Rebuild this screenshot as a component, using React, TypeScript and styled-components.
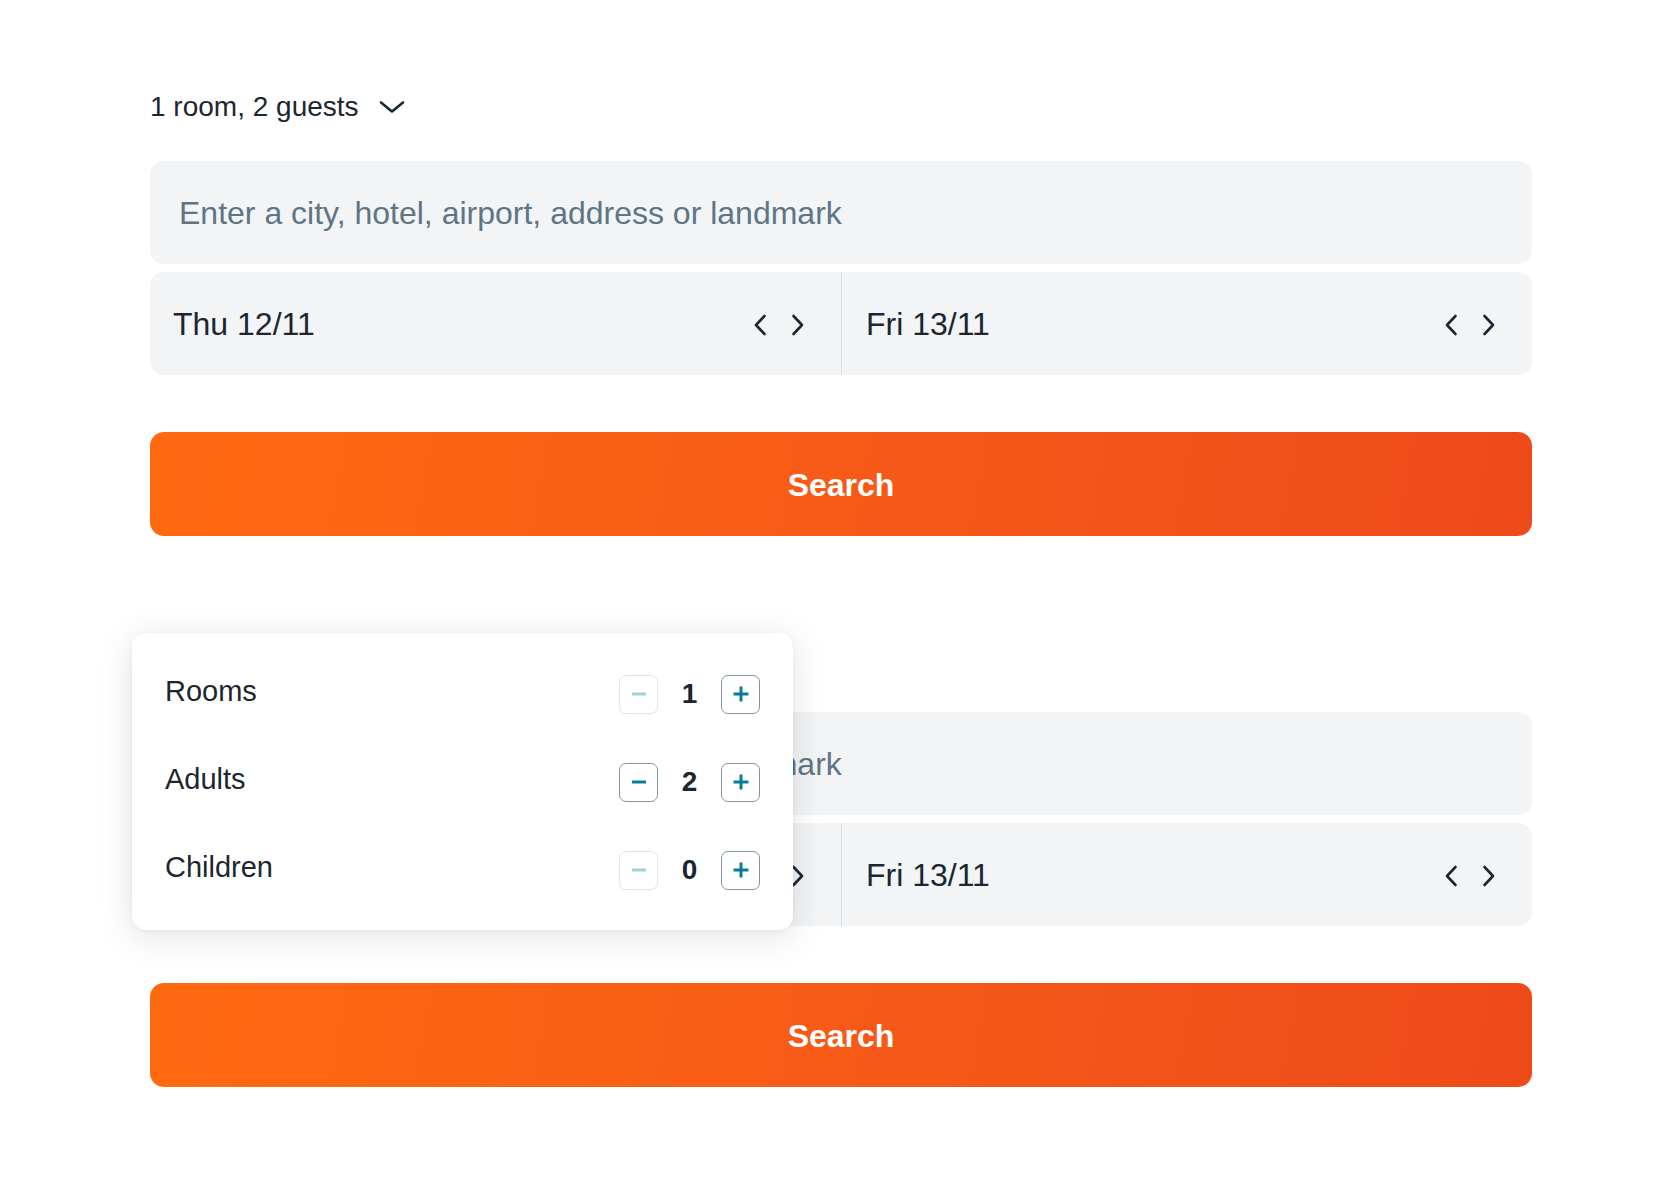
import styled, { createGlobalStyle } from "styled-components";

const GlobalStyle = createGlobalStyle`
  * { box-sizing: border-box; }
  body {
    margin: 0;
    background: #ffffff;
    font-family: "Liberation Sans", Arial, Helvetica, sans-serif;
    color: #1c2630;
  }
`

const Page = styled.div`
  width: 1680px;
  padding: 87px 148px 0 150px;
  display: flex;
  flex-direction: column;
  gap: 102px;
`

const Section = styled.section`
  position: relative;
  display: flex;
  flex-direction: column;
`

const GuestToggle = styled.div`
  height: 40px;
  display: flex;
  align-items: center;
  gap: 20px;
  font-size: 28px;
  color: #1c2630;
  margin-bottom: 34px;
`

const Field = styled.div`
  height: 103px;
  background: #f2f4f6;
  border-radius: 14px;
  display: flex;
  align-items: center;
  padding: 2px 29px 0;
  font-size: 32px;
  color: #5f7585;
`

const DateRow = styled.div`
  margin-top: 8px;
  height: 103px;
  background: #f2f4f6;
  border-radius: 14px;
  display: grid;
  grid-template-columns: 1fr 1fr;
`

const DateCell = styled.div<{ $divider?: boolean }>`
  display: flex;
  align-items: center;
  justify-content: space-between;
  padding: 2px 36px 0 ${p => (p.$divider ? "24px" : "23px")};
  border-left: ${p => (p.$divider ? "1px solid #d6dee4" : "none")};
  font-size: 32px;
  color: #1c2630;
`

const Arrows = styled.div`
  display: flex;
  gap: 24px;
  color: #1c2630;
`

const SearchButton = styled.button`
  margin-top: 57px;
  height: 104px;
  padding-top: 4px;
  border: none;
  border-radius: 14px;
  background: linear-gradient(100deg, #ff6a10 0%, #f85c17 45%, #ee4a1a 100%);
  color: #ffffff;
  font-family: "Liberation Sans", Arial, sans-serif;
  font-size: 32px;
  font-weight: 700;
  cursor: pointer;
`

const Popover = styled.div`
  position: absolute;
  top: -5px;
  left: -18px;
  width: 661px;
  height: 297px;
  background: #ffffff;
  border-radius: 14px;
  box-shadow: 0 6px 34px rgba(20, 30, 40, 0.13), 0 1px 4px rgba(20, 30, 40, 0.05);
  padding: 42px 33px 0 33px;
  display: flex;
  flex-direction: column;
  gap: 50px;
`

const CounterRow = styled.div`
  display: flex;
  align-items: center;
  justify-content: space-between;
  height: 38px;
`

const Label = styled.span`
  font-size: 29px;
  color: #1c2630;
  margin-top: -5px;
`

const Stepper = styled.div`
  display: flex;
  align-items: center;
`

const StepButton = styled.button<{ $disabled?: boolean }>`
  width: 39px;
  height: 39px;
  padding: 0;
  border-radius: 7px;
  background: #ffffff;
  border: 1.5px solid ${p => (p.$disabled ? "#dde3e7" : "#7e92a0")};
  color: ${p => (p.$disabled ? "#a3cfda" : "#0b7c98")};
  display: flex;
  align-items: center;
  justify-content: center;
  cursor: ${p => (p.$disabled ? "default" : "pointer")};
`

const Count = styled.span`
  width: 63px;
  text-align: center;
  font-size: 28px;
  font-weight: 700;
  color: #1c2630;
`

const ChevronDown = () => (
  <svg width="26" height="14" viewBox="0 0 26 14" fill="none">
    <path d="M2 2.5 L13 11.5 L24 2.5" stroke="#1c2630" strokeWidth="2.6" strokeLinecap="round" strokeLinejoin="round" />
  </svg>
)

const Chevron = ({ dir }: { dir: "left" | "right" }) => (
  <svg width="14" height="22" viewBox="0 0 14 22" fill="none">
    <path
      d={dir === "left" ? "M11.5 2 L3 11 L11.5 20" : "M2.5 2 L11 11 L2.5 20"}
      stroke="currentColor"
      strokeWidth="2.6"
      strokeLinecap="round"
      strokeLinejoin="round"
    />
  </svg>
)

const Minus = () => (
  <svg width="18" height="18" viewBox="0 0 18 18">
    <path d="M2 9 H16" stroke="currentColor" strokeWidth="3" strokeLinecap="butt" />
  </svg>
)

const Plus = () => (
  <svg width="18" height="18" viewBox="0 0 18 18">
    <path d="M1.5 9 H16.5 M9 1.5 V16.5" stroke="currentColor" strokeWidth="3" strokeLinecap="butt" />
  </svg>
)

const counters = [
  { label: "Rooms", value: 1, min: 1 },
  { label: "Adults", value: 2, min: 1 },
  { label: "Children", value: 0, min: 0 },
]

function DateHalf({ text, divider }: { text: string; divider?: boolean }) {
  return (
    <DateCell $divider={divider}>
      <span>{text}</span>
      <Arrows>
        <Chevron dir="left" />
        <Chevron dir="right" />
      </Arrows>
    </DateCell>
  )
}

function SearchForm({ open }: { open?: boolean }) {
  return (
    <Section>
      <GuestToggle>
        <span>1 room, 2 guests</span>
        <ChevronDown />
      </GuestToggle>
      <Field>Enter a city, hotel, airport, address or landmark</Field>
      <DateRow>
        <DateHalf text="Thu 12/11" />
        <DateHalf text="Fri 13/11" divider />
      </DateRow>
      <SearchButton>Search</SearchButton>
      {open && (
        <Popover>
          {counters.map(c => (
            <CounterRow key={c.label}>
              <Label>{c.label}</Label>
              <Stepper>
                <StepButton $disabled={c.value <= c.min}>
                  <Minus />
                </StepButton>
                <Count>{c.value}</Count>
                <StepButton>
                  <Plus />
                </StepButton>
              </Stepper>
            </CounterRow>
          ))}
        </Popover>
      )}
    </Section>
  )
}

export default function App() {
  return (
    <>
      <GlobalStyle />
      <Page>
        <SearchForm />
        <SearchForm open />
      </Page>
    </>
  )
}
